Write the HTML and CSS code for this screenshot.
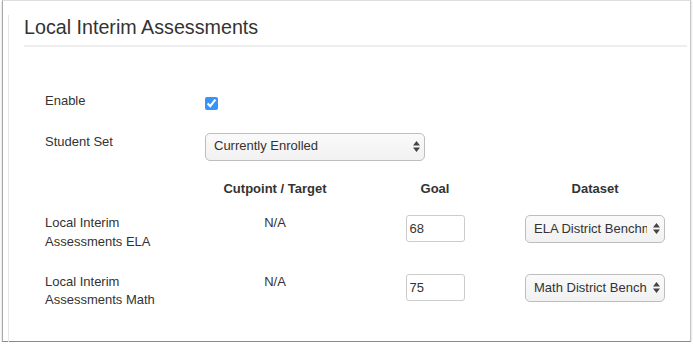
FILE: index.html
```html
<!DOCTYPE html>
<html lang="en">
<head>
<meta charset="UTF-8" />
<meta name="viewport" content="width=device-width, initial-scale=1" />
<title>Local Interim Assessments</title>
<link rel="stylesheet" href="styles.css">
</head>
<body>
<div class="window">
  <div class="panel">
    <h3 class="title">Local Interim Assessments</h3>
    <form class="settings">
      <div class="row row-enable">
        <label for="enable">Enable</label>
        <div><input type="checkbox" id="enable" class="check" checked /></div>
      </div>

      <div class="row row-set">
        <label for="studentSet">Student Set</label>
        <div class="select-wrap wide">
          <select id="studentSet">
            <option>Currently Enrolled</option>
            <option>All Students</option>
          </select>
          <svg width="7" height="11" viewBox="0 0 7 11"><path d="M3.5 0L7 4.5H0z M3.5 11L0 6.5H7z" fill="#444"/></svg>
        </div>
      </div>

      <div class="row row-head">
        <div></div>
        <div class="head">Cutpoint / Target</div>
        <div class="head">Goal</div>
        <div class="head">Dataset</div>
      </div>

      <div class="row row-first">
        <label for="goalEla">Local Interim Assessments ELA</label>
        <div class="na">N/A</div>
        <div class="goal"><input type="text" id="goalEla" value="68" /></div>
        <div class="select-wrap">
          <select>
            <option>ELA District Benchmark</option>
          </select>
          <svg width="7" height="11" viewBox="0 0 7 11"><path d="M3.5 0L7 4.5H0z M3.5 11L0 6.5H7z" fill="#444"/></svg>
        </div>
      </div>

      <div class="row row-second">
        <label for="goalMath">Local Interim Assessments Math</label>
        <div class="na">N/A</div>
        <div class="goal"><input type="text" id="goalMath" value="75" /></div>
        <div class="select-wrap">
          <select>
            <option>Math District Benchmark</option>
          </select>
          <svg width="7" height="11" viewBox="0 0 7 11"><path d="M3.5 0L7 4.5H0z M3.5 11L0 6.5H7z" fill="#444"/></svg>
        </div>
      </div>
    </form>
  </div>
</div>
</body>
</html>
```

FILE: styles.css
```css
body { margin:0; font-family:"Liberation Sans", Arial, sans-serif; font-size:13px; line-height:18.57px; color:#333; background:#fff; }
.window { margin-left:2px; width:689px; height:342px; box-sizing:border-box; border:1px solid; border-color:#ddd #c4c4c4 #8a8a8a #a9a9a9; box-shadow:0 1px 2px rgba(0,0,0,0.25); padding-left:5px; }
.panel { border-left:1px solid #e6e6e6; height:335px; box-sizing:border-box; padding:0 3px 0 15px; }
.title { margin:14px 0 0; font-size:19.7px; font-weight:normal; line-height:24px; padding-bottom:6px; border-bottom:2px solid #eee; }

.settings { padding:45px 0 0 21px; }
.row { display:grid; grid-template-columns:repeat(4, 140px); column-gap:20px; }
.row-set { margin-top:22px; }
.row-head { margin-top:19px; }
.row-first { margin-top:16px; }
.row-second { margin-top:21.6px; }
label { font-weight:normal; }

.check { display:block; width:13px; height:13px; margin:5px 0 0; accent-color:#3795fa; }

.head { font-weight:bold; text-align:center; }
.na { text-align:center; }
.goal { display:flex; justify-content:center; }
.goal input { width:59px; height:27px; margin-top:1px; box-sizing:border-box; border:1px solid #ccc; border-radius:3px; padding:0 3px; font:inherit; color:#333; }

.select-wrap { position:relative; margin-top:0; }
.select-wrap.wide { width:220px; grid-column:2 / span 2; }
.select-wrap select { -webkit-appearance:none; appearance:none; width:100%; height:28px; box-sizing:border-box; border:1px solid #bdbdbd; border-radius:5px; background:linear-gradient(#fafafa, #f1f1f1); padding:0 17px 0 8px; font:inherit; color:#333; }
.select-wrap svg { position:absolute; right:5px; top:8px; pointer-events:none; }
.row-first .select-wrap, .row-second .select-wrap { margin-top:1px; }
```
